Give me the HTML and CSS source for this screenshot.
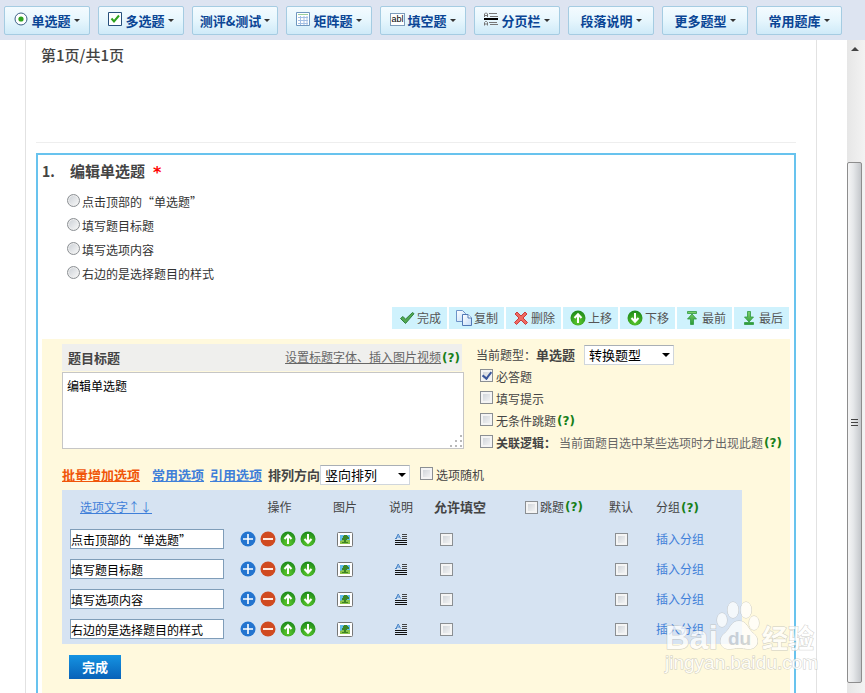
FILE: index.html
```html
<!DOCTYPE html>
<html lang="zh-CN">
<head>
<meta charset="utf-8">
<title>编辑单选题</title>
<link rel="stylesheet" href="styles.css">
</head>
<body>
<svg class="defs" aria-hidden="true">
  <defs>
    <radialGradient id="green" cx=".5" cy=".75" r=".7"><stop offset="0" stop-color="#5ecb2c"/><stop offset="1" stop-color="#1f8c1c"/></radialGradient>
    <linearGradient id="leaf" x1="0" y1="0" x2="0" y2="1"><stop offset="0" stop-color="#7ed06c"/><stop offset="1" stop-color="#2c9a35"/></linearGradient>
    <linearGradient id="paper" x1="0" y1="0" x2="1" y2="1"><stop offset="0" stop-color="#fff"/><stop offset="1" stop-color="#c3dcf8"/></linearGradient>
  </defs>
  <symbol id="i-add" viewBox="0 0 16 16"><circle cx="8" cy="8" r="7.5" fill="#2374cf"/><path d="M8 3v10M3 8h10" stroke="#fff" stroke-width="1.6"/></symbol>
  <symbol id="i-remove" viewBox="0 0 16 16"><circle cx="8" cy="8" r="7.5" fill="#d04a20"/><path d="M3 8h10" stroke="#ffe9e0" stroke-width="2"/></symbol>
  <symbol id="i-up" viewBox="0 0 16 16"><circle cx="8" cy="8" r="7.5" fill="url(#green)"/><path d="M8 13V5M4.500 8 8 4.200 11.500 8" fill="none" stroke="#fff" stroke-width="2"/></symbol>
  <symbol id="i-down" viewBox="0 0 16 16"><circle cx="8" cy="8" r="7.5" fill="url(#green)"/><path d="M8 3v8M4.500 8 8 11.800 11.500 8" fill="none" stroke="#fff" stroke-width="2"/></symbol>
  <symbol id="i-check" viewBox="0 0 16 16"><path d="M1.500 8.500 4 6.500l2.500 2.700L13.500 2.500l1.500 1.200-8.500 9.800z" fill="#52a852" stroke="#2f8240" stroke-width="1"/></symbol>
  <symbol id="i-copy" viewBox="0 0 16 16"><path d="M.5 .5h6l3 3v8h-9z" fill="url(#paper)" stroke="#6d93c8"/><path d="M6.500 4.500h5.500l3.500 3.500v7.500h-9z" fill="url(#paper)" stroke="#5178b5"/><path d="M12 4.500V8h3.500" fill="#fff" stroke="#5178b5"/></symbol>
  <symbol id="i-delete" viewBox="0 0 16 16"><path d="M2 4 4 2l4 4 4-4 2 2-4 4 4.500 4.500-2 2L8 10l-4.500 4.500-2-2L6 8z" fill="#ee6b62" stroke="#cc3b3c" stroke-width="1"/></symbol>
  <symbol id="i-first" viewBox="0 0 16 16"><path d="M3.500 1.500h9v2h-9zM8 4l4.500 5h-3v5.500h-3V9h-3z" fill="url(#leaf)" stroke="#2f9b40" stroke-width=".8"/></symbol>
  <symbol id="i-last" viewBox="0 0 16 16"><path d="M3.500 12.500h9v2h-9zM8 12 3.500 7h3V1.500h3V7h3z" fill="url(#leaf)" stroke="#2f9b40" stroke-width=".8"/></symbol>
  <symbol id="i-image" viewBox="0 0 16 15"><rect x=".5" y=".5" width="15" height="14" rx="1" fill="#fff" stroke="#777"/><path d="M3 3h10v9H3z" fill="#62bce8"/><path d="M3 9l3-1h7v4H3z" fill="#8ac34a"/><path d="M6 4h1V3h3v1h1v1h1v2h-2v1H9v2h2v1H5v-1h2V8H5V6h1z" fill="#3b8424"/></symbol>
  <symbol id="i-note" viewBox="0 0 12 12"><path d="M1 5.500 3.200 1 5.500 5.500M2 4h2.500M0 5.500h2" fill="none" stroke="#4a86c9" stroke-width="1"/><path d="M7 1.500h5M7 3.500h5M7 5.500h5" stroke="#444"/><path d="M0 7.500h12M0 9.500h12M0 11.500h12" stroke="#111"/></symbol>
</svg>

<nav class="toolbar">
  <button type="button" class="tool"><svg class="ico" viewBox="0 0 14 14"><circle cx="7" cy="7" r="6" fill="#fff" stroke="#3b5f85"/><circle cx="7" cy="7" r="2.600" fill="#2fa31e"/></svg>单选题</button>
  <button type="button" class="tool"><svg class="ico" viewBox="0 0 14 14"><path d="M.5 .5h13v13H.5z" fill="#fff" stroke="#28507c"/><path d="M3.500 6.500 6 9.500l5-6" fill="none" stroke="#2fa31e" stroke-width="2"/></svg>多选题</button>
  <button type="button" class="tool">测评&amp;测试</button>
  <button type="button" class="tool"><svg class="ico" viewBox="0 0 14 14"><path d="M.5 .5h13v13H.5z" fill="#fff" stroke="#6f97bf"/><path d="M2 2.500h10" stroke="#9ccf9a"/><path d="M2 5.500h10M2 8.500h10M2 11.500h10M4.500 4v9M8 4v9M11 4v9" stroke="#a4bfe4"/></svg>矩阵题</button>
  <button type="button" class="tool"><span class="abl">abl</span>填空题</button>
  <button type="button" class="tool"><svg class="ico" viewBox="0 0 14 14"><path d="M0 7h14" stroke="#000" stroke-width="2"/><path d="M5 1.500h8M6 4.500h8M5 10.500h8M6 12.500h8M.5 5V2l1-1h1l1 1v3M.5 3.500h3M.5 13.500v-3l1-1h1l1 1v3M.5 12h3" fill="none" stroke="#777"/></svg>分页栏</button>
  <button type="button" class="tool">段落说明</button>
  <button type="button" class="tool">更多题型</button>
  <button type="button" class="tool">常用题库</button>
</nav>

<div class="body">
  <main class="page">
    <h1 class="pager">第1页/共1页</h1>
    <section class="question">
      <h2 class="q-title"><span class="q-num">1.</span>编辑单选题<span class="star">*</span></h2>
      <div class="choices">
        <label><input type="radio" name="q">点击顶部的“单选题”</label>
        <label><input type="radio" name="q">填写题目标题</label>
        <label><input type="radio" name="q">填写选项内容</label>
        <label><input type="radio" name="q">右边的是选择题目的样式</label>
      </div>
      <div class="actions">
        <button type="button"><svg><use href="#i-check"/></svg>完成</button>
        <button type="button"><svg><use href="#i-copy"/></svg>复制</button>
        <button type="button"><svg><use href="#i-delete"/></svg>删除</button>
        <button type="button"><svg><use href="#i-up"/></svg>上移</button>
        <button type="button"><svg><use href="#i-down"/></svg>下移</button>
        <button type="button"><svg><use href="#i-first"/></svg>最前</button>
        <button type="button"><svg><use href="#i-last"/></svg>最后</button>
      </div>
      <form class="editor">
        <div class="top">
          <div class="heading">
            <div class="heading-bar">
              <label for="title">题目标题</label>
              <span><a class="grey" href="#">设置标题字体、插入图片视频</a><a class="help" href="#">(?)</a></span>
            </div>
            <div class="area"><textarea id="title">编辑单选题</textarea><svg viewBox="0 0 12 12"><path d="M10 0h2v2h-2zM5 5h2v2H5zM10 5h2v2h-2zM0 10h2v2H0zM5 10h2v2H5zM10 10h2v2h-2z" fill="#b9b9b9"/></svg></div>
          </div>
          <div class="settings">
            <div class="type"><label for="type">当前题型：<b>单选题</b></label><span class="select"><select id="type"><option>转换题型</option></select></span></div>
            <label><input type="checkbox" checked>必答题</label>
            <label><input type="checkbox">填写提示</label>
            <div class="line"><label><input type="checkbox">无条件跳题</label><a class="help" href="#">(?)</a></div>
            <div class="line"><label><input type="checkbox"><b>关联逻辑：</b><span class="hint">当前面题目选中某些选项时才出现此题</span></label><a class="help" href="#">(?)</a></div>
          </div>
        </div>
        <div class="bulk">
          <a class="hot" href="#">批量增加选项</a>
          <a href="#">常用选项</a>
          <a href="#">引用选项</a>
          <span class="dir"><label for="dir">排列方向</label><span class="select"><select id="dir"><option>竖向排列</option></select></span></span>
          <label class="random"><input type="checkbox">选项随机</label>
        </div>
        <table class="options">
          <colgroup><col class="c-text"><col class="c-ops"><col class="c-pic"><col class="c-note"><col class="c-fill"><col class="c-jump"><col class="c-def"><col class="c-group"></colgroup>
          <thead>
            <tr>
              <th class="first"><a href="#">选项文字↑↓</a></th><th>操作</th><th>图片</th><th>说明</th><th class="left"><b>允许填空</b></th>
              <th class="left jump"><span class="line"><label><input type="checkbox">跳题</label><a class="help" href="#">(?)</a></span></th><th>默认</th><th class="group">分组<a class="help" href="#">(?)</a></th>
            </tr>
          </thead>
          <tbody>
            <tr>
              <td class="text"><input type="text" aria-label="选项文字" value="点击顶部的“单选题”"></td>
              <td><div class="ops"><button type="button" aria-label="添加"><svg><use href="#i-add"/></svg></button><button type="button" aria-label="删除"><svg><use href="#i-remove"/></svg></button><button type="button" aria-label="上移"><svg><use href="#i-up"/></svg></button><button type="button" aria-label="下移"><svg><use href="#i-down"/></svg></button></div></td>
              <td><button type="button" aria-label="图片"><svg class="pic"><use href="#i-image"/></svg></button></td>
              <td><button type="button" aria-label="说明"><svg class="note"><use href="#i-note"/></svg></button></td>
              <td class="fill"><input type="checkbox" aria-label="允许填空"></td><td></td>
              <td><input type="checkbox" aria-label="默认"></td><td class="group"><a href="#">插入分组</a></td>
            </tr>
            <tr>
              <td class="text"><input type="text" aria-label="选项文字" value="填写题目标题"></td>
              <td><div class="ops"><button type="button" aria-label="添加"><svg><use href="#i-add"/></svg></button><button type="button" aria-label="删除"><svg><use href="#i-remove"/></svg></button><button type="button" aria-label="上移"><svg><use href="#i-up"/></svg></button><button type="button" aria-label="下移"><svg><use href="#i-down"/></svg></button></div></td>
              <td><button type="button" aria-label="图片"><svg class="pic"><use href="#i-image"/></svg></button></td>
              <td><button type="button" aria-label="说明"><svg class="note"><use href="#i-note"/></svg></button></td>
              <td class="fill"><input type="checkbox" aria-label="允许填空"></td><td></td>
              <td><input type="checkbox" aria-label="默认"></td><td class="group"><a href="#">插入分组</a></td>
            </tr>
            <tr>
              <td class="text"><input type="text" aria-label="选项文字" value="填写选项内容"></td>
              <td><div class="ops"><button type="button" aria-label="添加"><svg><use href="#i-add"/></svg></button><button type="button" aria-label="删除"><svg><use href="#i-remove"/></svg></button><button type="button" aria-label="上移"><svg><use href="#i-up"/></svg></button><button type="button" aria-label="下移"><svg><use href="#i-down"/></svg></button></div></td>
              <td><button type="button" aria-label="图片"><svg class="pic"><use href="#i-image"/></svg></button></td>
              <td><button type="button" aria-label="说明"><svg class="note"><use href="#i-note"/></svg></button></td>
              <td class="fill"><input type="checkbox" aria-label="允许填空"></td><td></td>
              <td><input type="checkbox" aria-label="默认"></td><td class="group"><a href="#">插入分组</a></td>
            </tr>
            <tr>
              <td class="text"><input type="text" aria-label="选项文字" value="右边的是选择题目的样式"></td>
              <td><div class="ops"><button type="button" aria-label="添加"><svg><use href="#i-add"/></svg></button><button type="button" aria-label="删除"><svg><use href="#i-remove"/></svg></button><button type="button" aria-label="上移"><svg><use href="#i-up"/></svg></button><button type="button" aria-label="下移"><svg><use href="#i-down"/></svg></button></div></td>
              <td><button type="button" aria-label="图片"><svg class="pic"><use href="#i-image"/></svg></button></td>
              <td><button type="button" aria-label="说明"><svg class="note"><use href="#i-note"/></svg></button></td>
              <td class="fill"><input type="checkbox" aria-label="允许填空"></td><td></td>
              <td><input type="checkbox" aria-label="默认"></td><td class="group"><a href="#">插入分组</a></td>
            </tr>
          </tbody>
        </table>
        <button type="button" class="done">完成</button>
      </form>
    </section>
  </main>
  <div class="scrollbar" aria-hidden="true">
    <svg class="arrow" viewBox="0 0 8 5"><path d="M0 4 4 0l4 4z" fill="#444"/></svg>
    <div class="thumb"><i></i><i></i><i></i></div>
  </div>
</div>

<svg class="watermark" viewBox="0 0 156 80">
  <g fill="#fff" stroke="#bdbdb8" stroke-width="1" paint-order="stroke">
    <ellipse cx="57" cy="18" rx="5" ry="7"/><ellipse cx="68" cy="8" rx="5.500" ry="8"/><ellipse cx="81" cy="8" rx="5.500" ry="8"/><ellipse cx="89" cy="21" rx="5" ry="7"/>
    <path d="M74 19c-8 0-9 8-14 12-7 5-6 16 4 16 5 0 7-1 10-1s5 1 10 1c10 0 11-11 4-16-5-4-6-12-14-12z"/>
    <text class="wm-big" x="0" y="47">Bai</text>
    <text class="wm-cjk" x="97" y="46">经验</text>
    <text class="wm-url" x="0" y="67">jingyan.baidu.com</text>
  </g>
  <text class="wm-du" x="63" y="43">du</text>
</svg>
</body>
</html>
```

FILE: styles.css
```css
* { box-sizing: border-box; }
body {
  margin: 0;
  height: 100vh;
  overflow: hidden;
  display: flex;
  flex-direction: column;
  position: relative;
  background: #fff;
  color: #444;
  font: 12px/16px "Noto Sans CJK SC", "DejaVu Sans", sans-serif;
}
button, input, select, textarea { font: inherit; color: #000; margin: 0; }
button { border: 0; padding: 0; background: none; }
svg { display: block; flex: none; width: 16px; height: 16px; }
.defs { position: absolute; width: 0; height: 0; }
a { color: #3f7fd9; }

.toolbar {
  flex: none;
  display: flex;
  gap: 8px;
  height: 40px;
  padding: 6px 4px 5px;
  background: #dde4f1;
}
.tool {
  flex: none;
  display: flex;
  align-items: center;
  justify-content: center;
  gap: 3px;
  width: 86px;
  border: 1px solid #a5cce2;
  border-radius: 2px;
  background: linear-gradient(#f4fbff, #e6f6fd 50%, #cfeaf8);
  color: #0a4595;
  font-size: 13px;
  font-weight: bold;
}
.tool::after {
  content: "";
  border: 3px solid transparent;
  border-top-color: #333;
  border-bottom: 0;
}
.ico, .abl { margin-bottom: 3px; }
.ico { width: 14px; height: 14px; }
.abl {
  border: 1px solid #7d9cba;
  background: #fff;
  color: #000;
  font: 9px/11px "Liberation Sans", sans-serif;
}

.body { flex: 1; min-height: 0; display: flex; }
.page {
  flex: 1;
  min-width: 0;
  display: flex;
  flex-direction: column;
  margin: 0 30px 0 25px;
  padding: 0 20px 0 10px;
  border: solid #e2e2e2;
  border-width: 0 1px;
}
.pager {
  flex: none;
  height: 103px;
  margin: 0 0 10px;
  padding: 5px;
  border-bottom: 1px solid #eee;
  font-size: 15px;
  font-weight: 500;
  line-height: 20px;
}
.question {
  flex: 1;
  display: flex;
  flex-direction: column;
  padding: 6px 4px 0;
  border: 2px solid #68c3ee;
  border-bottom: 0;
}
.q-title {
  display: flex;
  margin: 0;
  font-size: 15px;
  line-height: 20px;
}
.q-num { width: 28px; font-size: 14px; }
.star { margin-left: 8px; color: #f00; font: bold 16px/24px "DejaVu Sans", sans-serif; }

label, .line { display: flex; align-items: center; }
.choices { padding: 5px 0 0 25px; }
.choices label { gap: 2px; height: 24px; color: #333; }

input[type=radio], input[type=checkbox] {
  appearance: none;
  flex: none;
  width: 13px;
  height: 13px;
  border: 1px solid #8b8f93;
  background: linear-gradient(135deg, #c9ced4, #fafafa);
  box-shadow: inset 0 0 0 2px #f4f4f4;
}
input[type=radio] { border-radius: 50%; box-shadow: inset 0 0 0 1px #eee; }
.choices input, .settings input, .random input { margin-bottom: 4px; }
input[type=checkbox]:checked::after {
  content: "";
  display: block;
  box-sizing: border-box;
  width: 6px;
  height: 9px;
  margin-left: 3px;
  border: solid #3a569c;
  border-width: 0 2px 2px 0;
  transform: rotate(38deg);
}

.actions { display: flex; justify-content: flex-end; gap: 2px; padding: 21px 1px 10px 0; }
.actions button {
  display: flex;
  align-items: center;
  gap: 2px;
  height: 22px;
  padding: 0 6px 0 7px;
  background: #cff2fd;
  color: #555;
}

.editor { flex: 1; padding: 5px 0 0 20px; background: #fff9dd; }
.top { display: grid; grid-template-columns: 402fr 314fr; gap: 12px; }
.heading-bar {
  display: flex;
  align-items: center;
  justify-content: space-between;
  height: 27px;
  margin: 0 2px 1px 0;
  padding: 0 2px 0 6px;
  background: #efefed;
}
.heading-bar label { font-size: 13px; font-weight: bold; }
.grey { color: #666; }
.help { margin-left: 1px; color: #17801a; font: bold 12px/16px "DejaVu Sans", sans-serif; text-decoration: none; }
.area { position: relative; }
.area svg { position: absolute; right: 2px; bottom: 2px; width: 12px; height: 12px; }
textarea {
  display: block;
  width: 100%;
  height: 77px;
  padding: 5px 4px;
  border: 1px solid #c6c6c6;
  resize: none;
}
.type { display: flex; align-items: center; gap: 9px; height: 22px; }
.type b { font-size: 13px; }
.settings > label, .settings > .line { height: 22px; padding-left: 4px; }
.settings label { gap: 3px; }
.settings .type label { gap: 0; }
.hint { color: #666; white-space: nowrap; }
.select { position: relative; display: flex; }
.select::after {
  content: "";
  position: absolute;
  right: 4px;
  top: 8px;
  border: 4px solid transparent;
  border-top-color: #000;
  border-bottom: 0;
}
select {
  appearance: none;
  width: 90px;
  height: 20px;
  padding: 0 4px;
  border: 1px solid #d0d6dc;
  border-top-color: #a9afb5;
  border-radius: 0;
  background: #fff;
}
.type select, .dir select { font-size: 13px; font-weight: normal; line-height: 18px; }

.bulk {
  display: flex;
  align-items: center;
  gap: 6px;
  height: 20px;
  margin: 11px 0 5px;
  font-size: 13px;
  font-weight: bold;
}
.bulk .hot { margin-right: 6px; color: #f0560a; }
.dir { display: flex; align-items: center; }
.random { gap: 3px; padding-left: 4px; font-size: 12px; font-weight: normal; }

.options {
  width: calc(100% - 48px);
  table-layout: fixed;
  border-collapse: collapse;
  background: #d6e3f2;
}
.c-text { width: 175px; }
.c-ops { width: 85px; }
.c-pic { width: 46px; }
.c-note { width: 66px; }
.c-fill { width: 91px; }
.c-jump { width: 78px; }
.c-def { width: 36px; }
.options th, .options td { padding: 0; text-align: center; font-weight: normal; white-space: nowrap; }
.options th { height: 34px; }
.options td { height: 30px; }
.options .first { padding-left: 18px; text-align: left; }
.options .text { padding-left: 8px; text-align: left; }
.options .left { text-align: left; }
.options .left b { font-size: 13px; }
.options label { gap: 2px; }
.options .fill { padding-left: 6px; text-align: left; }
.options .group { padding-left: 17px; text-align: left; }
td.group a { text-decoration: none; }
.options td input, .options td button { display: block; margin: 0 auto; }
.options .text input {
  width: 154px;
  height: 20px;
  margin: 0;
  padding: 0;
  border: 1px solid #7f9db9;
  background: #fff;
}
.options .fill input { margin: 0; }
.ops { display: flex; justify-content: center; gap: 4px; padding-right: 4px; }
.options .ops button { margin: 0; }
svg.pic { height: 15px; }
svg.note { width: 12px; height: 12px; }
.done {
  display: block;
  width: 52px;
  height: 24px;
  margin: 11px 0 0 7px;
  background: linear-gradient(#1593e2, #0862b8);
  color: #fff;
  font-size: 13px;
  font-weight: bold;
}

.scrollbar {
  flex: none;
  display: flex;
  flex-direction: column;
  align-items: center;
  width: 18px;
  padding: 7px 3px 10px 0;
  background: linear-gradient(90deg, #e6e6e6, #f3f3f3);
}
.arrow { width: 8px; height: 5px; margin-bottom: 110px; }
.thumb {
  flex: 1;
  display: flex;
  flex-direction: column;
  align-items: center;
  justify-content: center;
  gap: 2px;
  width: 100%;
  border: 1px solid #8d8d8d;
  border-radius: 2px;
  background: linear-gradient(90deg, #f5f5f5, #e6e8ea 40%, #c4c7cb);
}
.thumb i { width: 7px; height: 1px; background: #444; }

.watermark {
  position: absolute;
  right: 44px;
  bottom: 11px;
  width: 156px;
  height: 80px;
  opacity: 0.75;
  overflow: visible;
  pointer-events: none;
}
.wm-big { font: bold 34px "Liberation Sans", sans-serif; }
.wm-cjk { font: bold 26px "Noto Sans CJK SC", sans-serif; }
.wm-url { font: 19px "Liberation Sans", sans-serif; }
.wm-du { font: bold 19px "Liberation Sans", sans-serif; fill: #c3c9d0; }
```
